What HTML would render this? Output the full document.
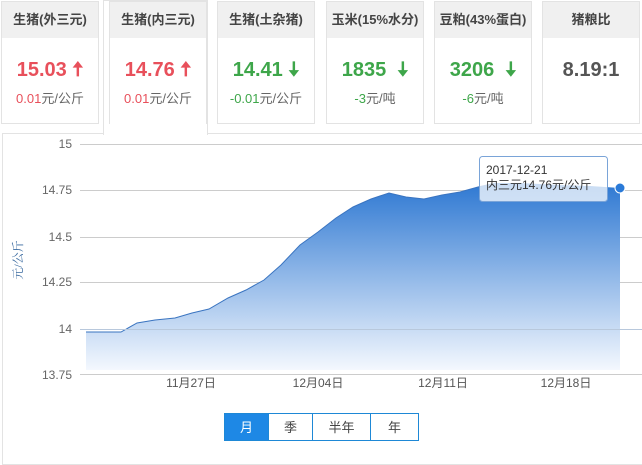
<!DOCTYPE html>
<html><head><meta charset="utf-8"><style>
body{margin:0;width:642px;height:450px;background:#fff;font-family:"Liberation Sans","Noto Sans CJK SC",sans-serif;position:relative;overflow:hidden}
.c{position:absolute;top:1px;width:98px;height:123px;border:1px solid #e3e3e3;box-sizing:border-box;text-align:center}
.c .h{height:36px;background:#f0f0f0;line-height:36px;font-size:13px;font-weight:bold;color:#444}
.c .v{font-size:20px;font-weight:bold;margin-top:20px;height:24px;line-height:24px}
.c .s{font-size:13px;color:#666;margin-top:6px}
.r{color:#e8505b}.g{color:#3ea64a}
.panel{position:absolute;left:2px;top:133px;width:660px;height:330px;border:1px solid #e3e3e3}
.act{position:absolute;left:103px;top:0;width:105px;height:135px;border:1px solid #e3e3e3;border-bottom:none;background:#fff;box-sizing:border-box}
.btn{position:absolute;top:413px;height:28px;line-height:28px;text-align:center;font-size:13px;color:#444;border:1px solid #1e88d6;box-sizing:border-box}
</style></head><body>
<div class="panel"></div>
<div class="act"></div>
<div class="c" style="left:1px"><div class="h">生猪(外三元)</div><div class="v r">15.03 <span>🠅</span></div><div class="s"><span class="r">0.01</span>元/公斤</div></div>
<div class="c" style="left:109px;border-bottom:none"><div class="h">生猪(内三元)</div><div class="v r">14.76 🠅</div><div class="s"><span class="r">0.01</span>元/公斤</div></div>
<div class="c" style="left:217px"><div class="h">生猪(土杂猪)</div><div class="v g">14.41 🠇</div><div class="s"><span class="g">-0.01</span>元/公斤</div></div>
<div class="c" style="left:326px"><div class="h">玉米(15%水分)</div><div class="v g">1835 &nbsp;🠇</div><div class="s"><span class="g">-3</span>元/吨</div></div>
<div class="c" style="left:434px"><div class="h">豆粕(43%蛋白)</div><div class="v g">3206 &nbsp;🠇</div><div class="s"><span class="g">-6</span>元/吨</div></div>
<div class="c" style="left:542px"><div class="h">猪粮比</div><div class="v" style="color:#555">8.19:1</div></div>
<svg style="position:absolute;left:0;top:0" width="642" height="450">
<defs><linearGradient id="gr" x1="0" y1="0" x2="0" y2="1"><stop offset="0" stop-color="#2e78d2"/><stop offset="1" stop-color="#f4f8fe"/></linearGradient></defs>
<g stroke="#ccc" stroke-width="1">
<line x1="80" y1="144.5" x2="642" y2="144.5"/><line x1="80" y1="190.5" x2="642" y2="190.5"/><line x1="80" y1="237.5" x2="642" y2="237.5"/><line x1="80" y1="282.5" x2="642" y2="282.5"/><line x1="80" y1="374.5" x2="642" y2="374.5"/></g>
<path d="M86,332 L121,332 L137,323 L155,320 L175,318 L192,313 L209,309 L228,298 L246,290 L264,280 L281,265 L300,245 L318,232 L336,218 L353,207 L371,199 L389,193 L406,197 L424,199 L442,195 L460,192 L478,187 L496,183 L520,183 L560,185 L590,186 L620,188 L620,370 L86,370 Z" fill="url(#gr)"/>
<path d="M86,332 L121,332 L137,323 L155,320 L175,318 L192,313 L209,309 L228,298 L246,290 L264,280 L281,265 L300,245 L318,232 L336,218 L353,207 L371,199 L389,193 L406,197 L424,199 L442,195 L460,192 L478,187 L496,183" fill="none" stroke="#3a74c0" stroke-width="1"/>
<line x1="80" y1="329.5" x2="642" y2="329.5" stroke="#b8c8dc"/>
<circle cx="620" cy="188" r="5" fill="#2a7ad8" stroke="#fff" stroke-width="1"/>
<g font-size="12" fill="#666" text-anchor="end" font-family="Liberation Sans,sans-serif">
<text x="72" y="148">15</text><text x="72" y="194">14.75</text><text x="72" y="241">14.5</text><text x="72" y="286">14.25</text><text x="72" y="333">14</text><text x="72" y="379">13.75</text></g>
<g font-size="12" fill="#555" text-anchor="middle" font-family="Liberation Sans,Noto Sans CJK SC,sans-serif">
<text x="191" y="387">11月27日</text><text x="318" y="387">12月04日</text><text x="443" y="387">12月11日</text><text x="566" y="387">12月18日</text></g>
<text transform="translate(22,260) rotate(-90)" font-size="12" fill="#3a6aa0" text-anchor="middle" font-family="Liberation Serif,Noto Serif CJK SC,serif">元/公斤</text>
<rect x="479.5" y="156.5" width="128" height="45" rx="3" fill="#fff" fill-opacity="0.75" stroke="#7aa4d8"/>
<text x="486" y="174" font-size="12" fill="#333" font-family="Liberation Sans,sans-serif">2017-12-21</text>
<text x="486" y="189" font-size="12" fill="#333" font-family="Liberation Sans,Noto Sans CJK SC,sans-serif">内三元14.76元/公斤</text>
</svg>
<div class="btn" style="left:224px;width:45px;background:#1e88e5;color:#fff">月</div>
<div class="btn" style="left:268px;width:45px;background:#fff">季</div>
<div class="btn" style="left:312px;width:59px;background:#fff">半年</div>
<div class="btn" style="left:370px;width:49px;background:#fff">年</div>
</body></html>
